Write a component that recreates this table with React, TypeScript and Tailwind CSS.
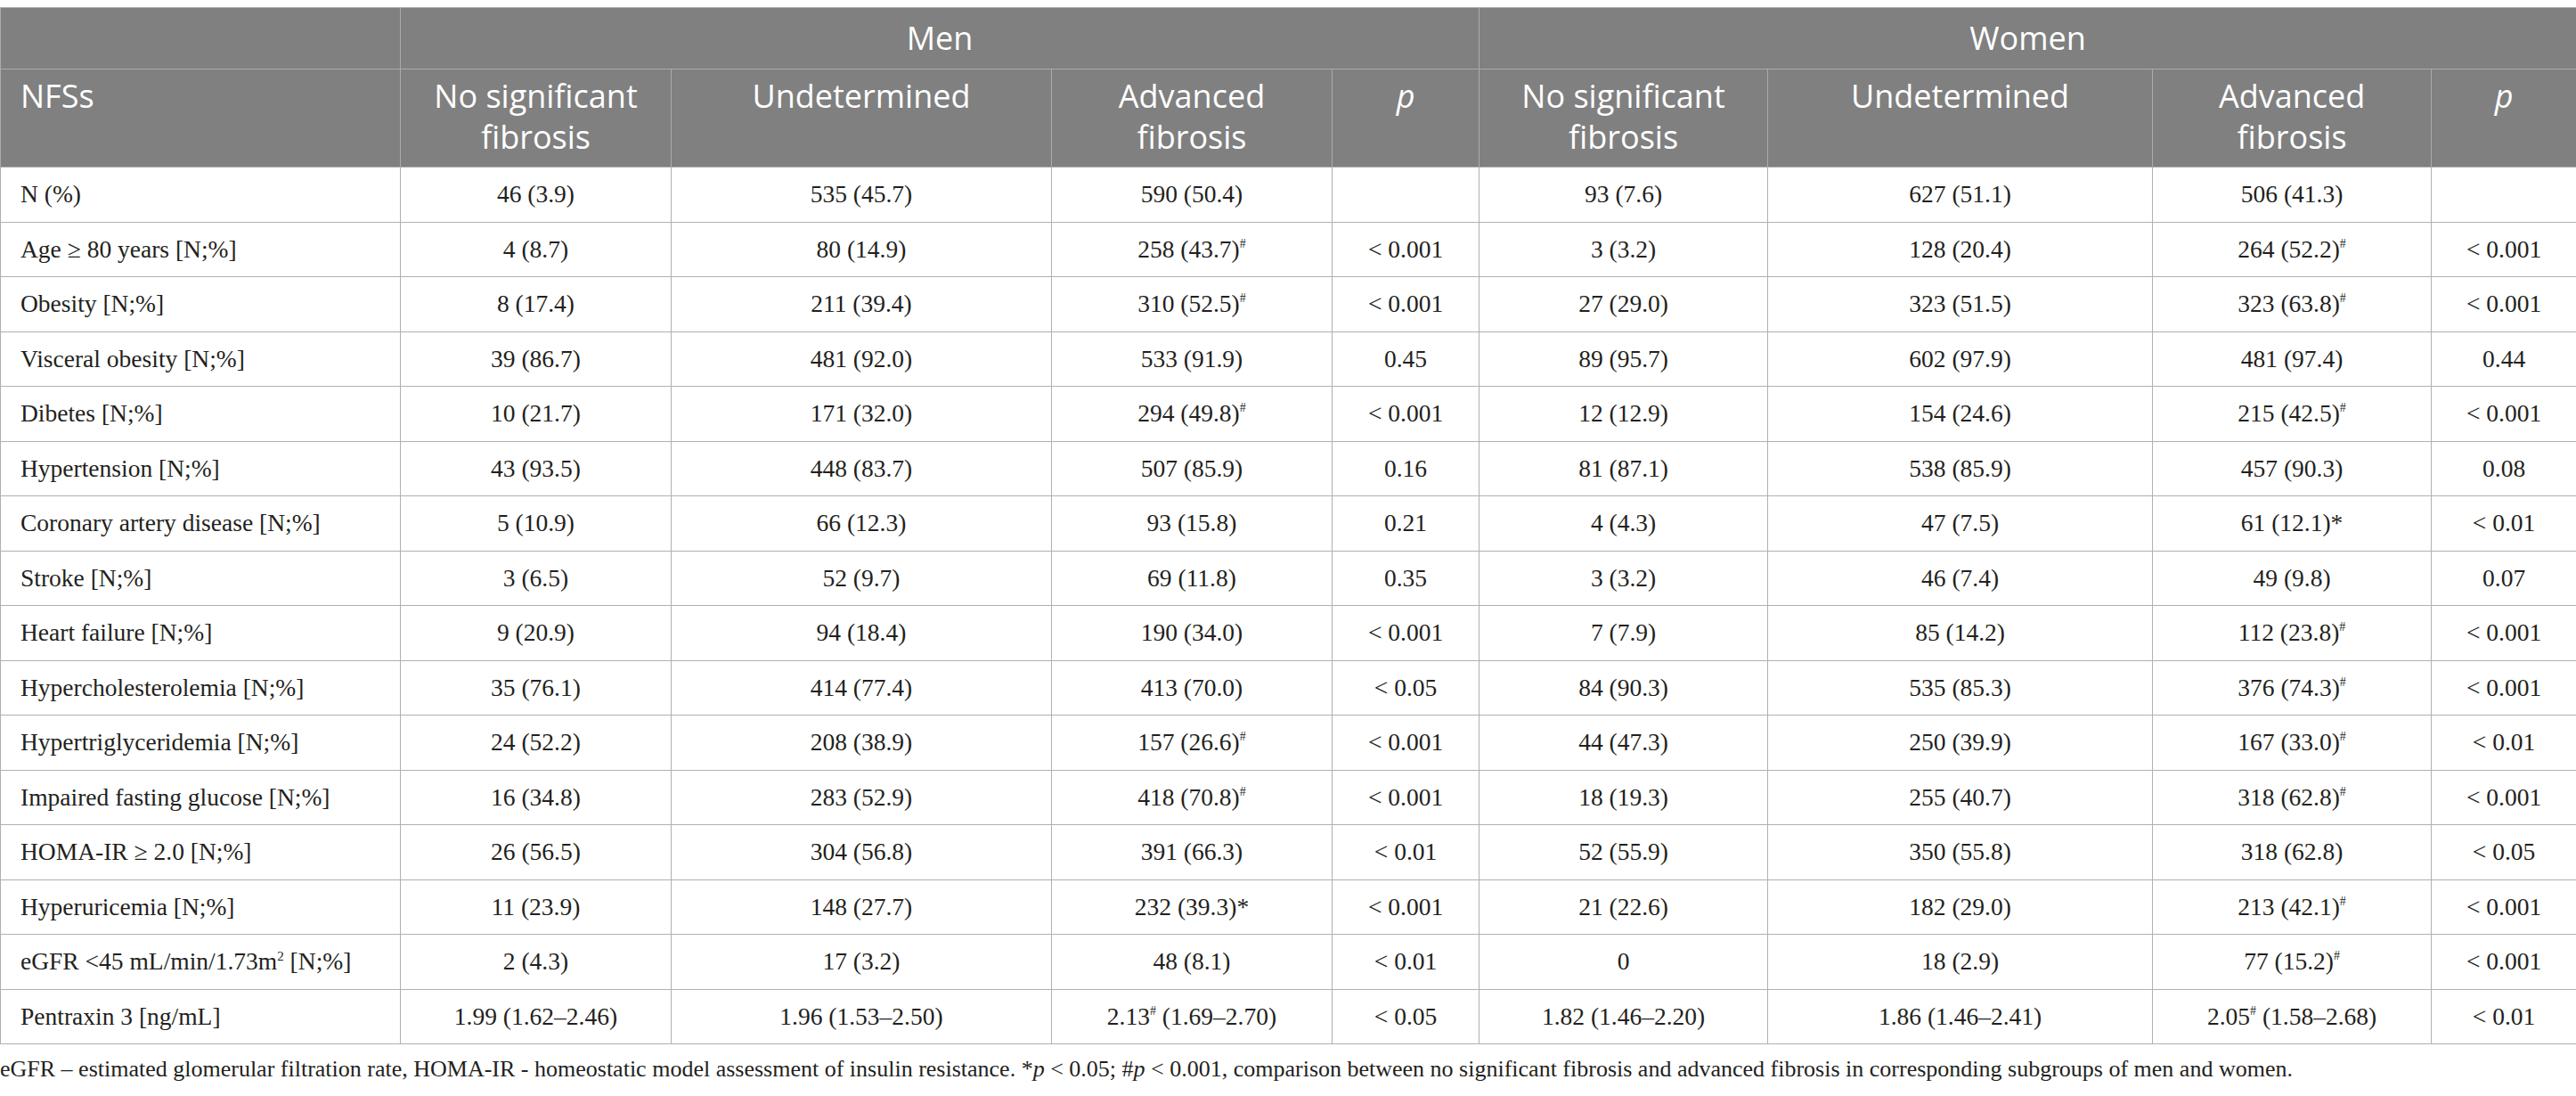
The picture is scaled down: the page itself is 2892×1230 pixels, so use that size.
const rows: string[][] = [
  ["N (%)", "46 (3.9)", "535 (45.7)", "590 (50.4)", "", "93 (7.6)", "627 (51.1)", "506 (41.3)", ""],
  ["Age ≥ 80 years [N;%]", "4 (8.7)", "80 (14.9)", "258 (43.7)#", "< 0.001", "3 (3.2)", "128 (20.4)", "264 (52.2)#", "< 0.001"],
  ["Obesity [N;%]", "8 (17.4)", "211 (39.4)", "310 (52.5)#", "< 0.001", "27 (29.0)", "323 (51.5)", "323 (63.8)#", "< 0.001"],
  ["Visceral obesity [N;%]", "39 (86.7)", "481 (92.0)", "533 (91.9)", "0.45", "89 (95.7)", "602 (97.9)", "481 (97.4)", "0.44"],
  ["Dibetes [N;%]", "10 (21.7)", "171 (32.0)", "294 (49.8)#", "< 0.001", "12 (12.9)", "154 (24.6)", "215 (42.5)#", "< 0.001"],
  ["Hypertension [N;%]", "43 (93.5)", "448 (83.7)", "507 (85.9)", "0.16", "81 (87.1)", "538 (85.9)", "457 (90.3)", "0.08"],
  ["Coronary artery disease [N;%]", "5 (10.9)", "66 (12.3)", "93 (15.8)", "0.21", "4 (4.3)", "47 (7.5)", "61 (12.1)*", "< 0.01"],
  ["Stroke [N;%]", "3 (6.5)", "52 (9.7)", "69 (11.8)", "0.35", "3 (3.2)", "46 (7.4)", "49 (9.8)", "0.07"],
  ["Heart failure [N;%]", "9 (20.9)", "94 (18.4)", "190 (34.0)", "< 0.001", "7 (7.9)", "85 (14.2)", "112 (23.8)#", "< 0.001"],
  ["Hypercholesterolemia [N;%]", "35 (76.1)", "414 (77.4)", "413 (70.0)", "< 0.05", "84 (90.3)", "535 (85.3)", "376 (74.3)#", "< 0.001"],
  ["Hypertriglyceridemia [N;%]", "24 (52.2)", "208 (38.9)", "157 (26.6)#", "< 0.001", "44 (47.3)", "250 (39.9)", "167 (33.0)#", "< 0.01"],
  ["Impaired fasting glucose [N;%]", "16 (34.8)", "283 (52.9)", "418 (70.8)#", "< 0.001", "18 (19.3)", "255 (40.7)", "318 (62.8)#", "< 0.001"],
  ["HOMA-IR ≥ 2.0 [N;%]", "26 (56.5)", "304 (56.8)", "391 (66.3)", "< 0.01", "52 (55.9)", "350 (55.8)", "318 (62.8)", "< 0.05"],
  ["Hyperuricemia [N;%]", "11 (23.9)", "148 (27.7)", "232 (39.3)*", "< 0.001", "21 (22.6)", "182 (29.0)", "213 (42.1)#", "< 0.001"],
  ["eGFR", "2 (4.3)", "17 (3.2)", "48 (8.1)", "< 0.01", "0", "18 (2.9)", "77 (15.2)#", "< 0.001"],
  ["Pentraxin 3 [ng/mL]", "1.99 (1.62–2.46)", "1.96 (1.53–2.50)", "2.13# (1.69–2.70)", "< 0.05", "1.82 (1.46–2.20)", "1.86 (1.46–2.41)", "2.05# (1.58–2.68)", "< 0.01"],
];

function Val({ v }: { v: string }) {
  if (v === "eGFR") {
    return (
      <>
        eGFR &lt;45 mL/min/1.73m<sup className="text-[15px] -top-[10px]">2</sup> [N;%]
      </>
    );
  }
  if (!v.includes("#")) return <>{v}</>;
  const [a, b] = v.split("#");
  return (
    <>
      {a}
      <sup className="text-[14px] -top-[11px]">#</sup>
      {b}
    </>
  );
}

const th = "border border-[#ababab] font-normal text-white text-[36px] leading-[46px] font-['Open_Sans',sans-serif]";
const td = "border border-[#b0b0b0] font-['Liberation_Serif','Times_New_Roman',serif] text-[27.5px] leading-[32px] p-0";

export default function App() {
  return (
    <div className="w-[2892px] bg-white pt-2 text-[#231f20]">
      <table className="w-[2892px] table-fixed border-collapse">
        <colgroup>
          <col className="w-[449px]" />
          <col className="w-[304px]" />
          <col className="w-[427px]" />
          <col className="w-[315px]" />
          <col className="w-[165px]" />
          <col className="w-[324px]" />
          <col className="w-[432px]" />
          <col className="w-[313px]" />
          <col className="w-[163px]" />
        </colgroup>
        <thead className="bg-[#808080]">
          <tr className="h-[69px]">
            <th className={th}></th>
            <th colSpan={4} className={`${th} text-center`}>Men</th>
            <th colSpan={4} className={`${th} text-center`}>Women</th>
          </tr>
          <tr className="h-[110px] align-top">
            <th className={`${th} text-left pl-[22px] pt-[7px]`}>NFSs</th>
            <th className={`${th} text-center pt-[7px]`}>No significant<br />fibrosis</th>
            <th className={`${th} text-center pt-[7px]`}>Undetermined</th>
            <th className={`${th} text-center pt-[7px]`}>Advanced<br />fibrosis</th>
            <th className={`${th} text-center pt-[7px] italic`}>p</th>
            <th className={`${th} text-center pt-[7px]`}>No significant<br />fibrosis</th>
            <th className={`${th} text-center pt-[7px]`}>Undetermined</th>
            <th className={`${th} text-center pt-[7px]`}>Advanced<br />fibrosis</th>
            <th className={`${th} text-center pt-[7px] italic`}>p</th>
          </tr>
        </thead>
        <tbody>
          {rows.map((r, i) => (
            <tr key={i} className="h-[61.5px]">
              {r.map((c, j) => (
                <td key={j} className={j === 0 ? `${td} text-left pl-[22px]` : `${td} text-center`}>
                  <Val v={c} />
                </td>
              ))}
            </tr>
          ))}
        </tbody>
      </table>
      <p className="font-['Liberation_Serif','Times_New_Roman',serif] text-[26px] leading-[34px] mt-[11px]">
        eGFR – estimated glomerular filtration rate, HOMA-IR - homeostatic model assessment of insulin resistance. *<i>p</i> &lt; 0.05; #<i>p</i> &lt; 0.001, comparison between no significant fibrosis and advanced fibrosis in corresponding subgroups of men and women.
      </p>
    </div>
  );
}
